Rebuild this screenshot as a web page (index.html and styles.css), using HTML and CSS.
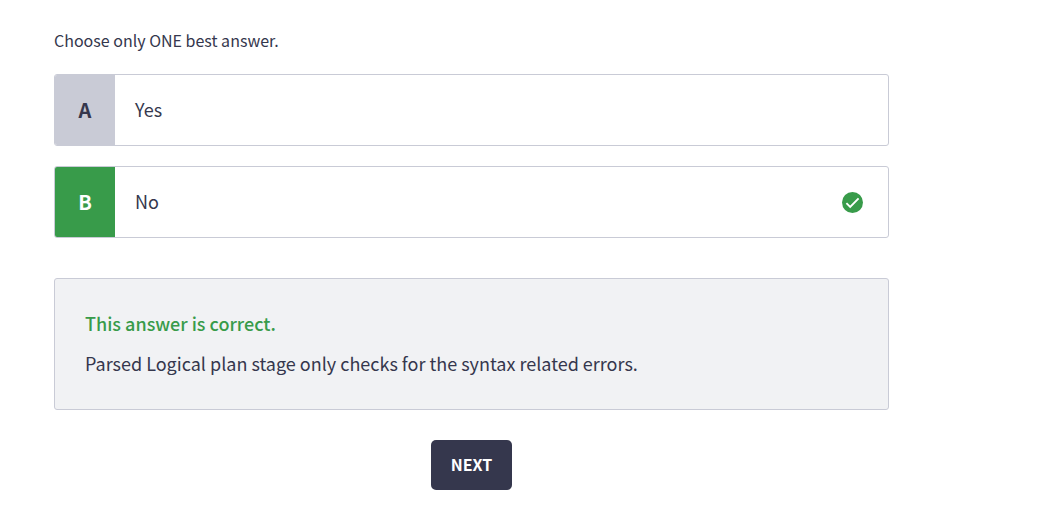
FILE: index.html
```
<!DOCTYPE html>
<html lang="en">
<head>
<meta charset="utf-8">
<meta name="viewport" content="width=device-width, initial-scale=1">
<title>Quiz question</title>
<link rel="stylesheet" href="styles.css">
</head>
<body>
<main class="quiz">
  <p class="hint">Choose only ONE best answer.</p>
  <div class="options">
    <button class="option" type="button">
      <span class="letter">A</span>
      <span class="answer">Yes</span>
    </button>
    <button class="option option-correct" type="button">
      <span class="letter">B</span>
      <span class="answer">No</span>
      <svg class="check" viewBox="0 0 20 20" role="img" aria-label="Correct">
        <circle cx="10" cy="10" r="10" fill="#389b4a"/>
        <path d="M4.2 10.6 7.8 14.2 15.8 6" fill="none" stroke="#fff" stroke-width="1.8"/>
      </svg>
    </button>
  </div>
  <section class="feedback">
    <h2 class="verdict">This answer is correct.</h2>
    <p class="explanation">Parsed Logical plan stage only checks for the syntax related errors.</p>
  </section>
  <button class="next" type="button">NEXT</button>
</main>
</body>
</html>
```
FILE: styles.css
```
* {
  box-sizing: border-box;
}

body {
  margin: 0;
  background: #fff;
  color: #35374d;
  font-family: "Noto Sans CJK SC", "Noto Sans", sans-serif;
  font-size: 18px;
  line-height: 30px;
}

button {
  font: inherit;
  color: inherit;
  cursor: pointer;
}

.quiz {
  display: flex;
  flex-direction: column;
  padding: 25px 153px 26px 54px;
}

.hint {
  margin: 0 0 19px;
  font-size: 16px;
}

.options {
  display: flex;
  flex-direction: column;
  gap: 20px;
}

.option {
  display: flex;
  align-items: center;
  min-height: 72px;
  padding: 0 25px 0 0;
  border: 1px solid #c9cbd6;
  border-radius: 3px;
  background: #fff;
  text-align: left;
  overflow: hidden;
}

.letter {
  display: flex;
  align-items: center;
  justify-content: center;
  align-self: stretch;
  width: 60px;
  background: #c9cbd6;
  font-size: 20px;
  font-weight: 700;
}

.option-correct .letter {
  background: #389b4a;
  color: #fff;
}

.answer {
  flex: 1;
  padding: 0 20px 2px;
}

.check {
  width: 21px;
  height: 21px;
}

.feedback {
  margin: 40px 0 30px;
  padding: 29px 30px 31px;
  border: 1px solid #c9cbd6;
  border-radius: 3px;
  background: #f1f2f4;
}

.verdict {
  margin: 0 0 10px;
  color: #389b4a;
  font-size: 18px;
  font-weight: 500;
}

.explanation {
  margin: 0;
}

.next {
  align-self: center;
  padding: 9px 20px 11px;
  border: 0;
  border-radius: 5px;
  background: #35374d;
  color: #fff;
  font-size: 16px;
  font-weight: 700;
}
```
